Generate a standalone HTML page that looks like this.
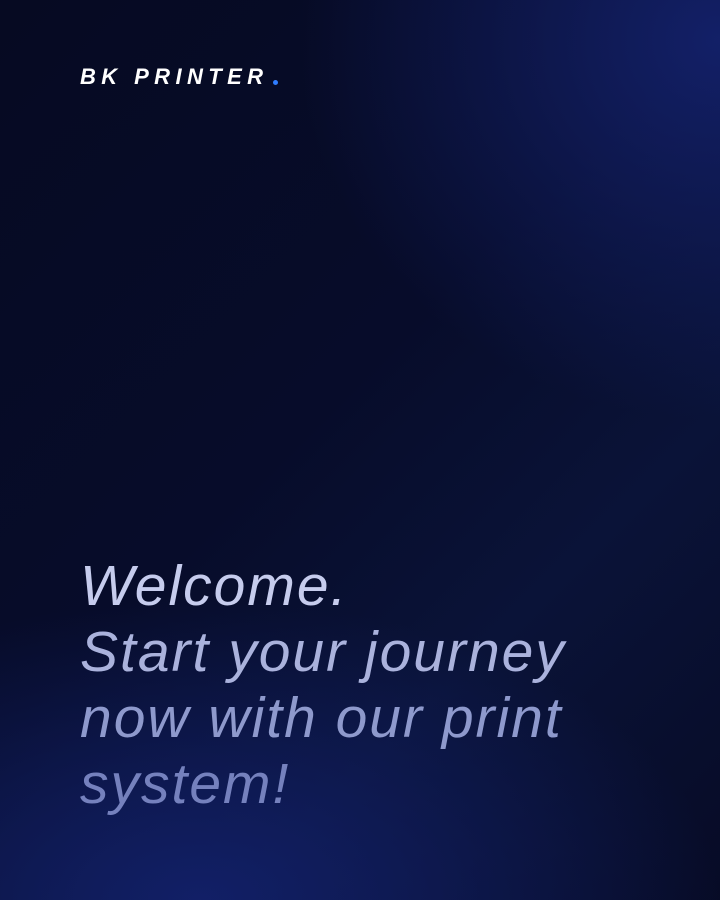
<!DOCTYPE html>
<html><head><style>
html,body{margin:0;padding:0}
body{width:720px;height:900px;overflow:hidden;position:relative;
background:
radial-gradient(ellipse 420px 380px at 720px 40px, rgba(20,34,110,0.9), rgba(20,34,110,0) 100%),
radial-gradient(ellipse 520px 300px at 200px 900px, rgba(18,32,105,0.95), rgba(18,32,105,0) 100%),
linear-gradient(135deg,#060a22 0%,#070c2a 45%,#0a1338 70%,#070b26 100%);
font-family:"Liberation Sans",sans-serif}
.logo{position:absolute;left:80px;top:64px;font-size:22px;font-weight:bold;font-style:italic;color:#fff;letter-spacing:5.4px}
.logo span{position:absolute;left:193px;top:16px;width:5px;height:5px;border-radius:50%;background:#2f7dff}
.t{position:absolute;left:80px;top:553px;font-size:57px;font-style:italic;font-weight:300;line-height:66px;letter-spacing:2px}
.t div{white-space:nowrap}
</style></head><body>
<div class="logo">BK PRINTER<span></span></div>
<div class="t">
<div style="color:#c6cced">Welcome.</div>
<div style="color:#aab2dc">Start your journey</div>
<div style="color:#8e99cc">now with our print</div>
<div style="color:#7581bd">system!</div>
</div>
</body></html>
